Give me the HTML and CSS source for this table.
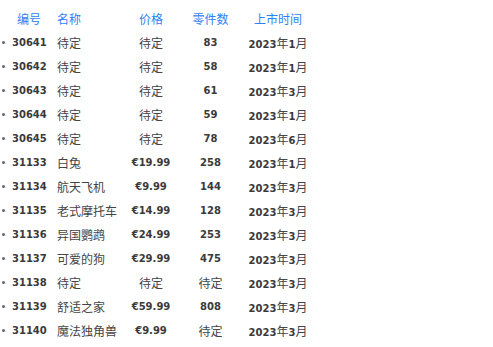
FILE: index.html
```html
<!DOCTYPE html>
<html lang="zh">
<head>
<meta charset="utf-8">
<link rel="stylesheet" href="styles.css">
</head>
<body>
<div class="list">
  <div class="row head">
    <span></span><span class="c">编号</span><span class="name">名称</span><span class="c">价格</span><span class="c">零件数</span><span class="c">上市时间</span>
  </div>
  <div class="row"><i class="dot"></i><span class="c n">30641</span><span class="name">待定</span><span class="c">待定</span><span class="c n">83</span><span class="c"><b class="n">2023</b>年<b class="n">1</b>月</span></div>
  <div class="row"><i class="dot"></i><span class="c n">30642</span><span class="name">待定</span><span class="c">待定</span><span class="c n">58</span><span class="c"><b class="n">2023</b>年<b class="n">1</b>月</span></div>
  <div class="row"><i class="dot"></i><span class="c n">30643</span><span class="name">待定</span><span class="c">待定</span><span class="c n">61</span><span class="c"><b class="n">2023</b>年<b class="n">3</b>月</span></div>
  <div class="row"><i class="dot"></i><span class="c n">30644</span><span class="name">待定</span><span class="c">待定</span><span class="c n">59</span><span class="c"><b class="n">2023</b>年<b class="n">1</b>月</span></div>
  <div class="row"><i class="dot"></i><span class="c n">30645</span><span class="name">待定</span><span class="c">待定</span><span class="c n">78</span><span class="c"><b class="n">2023</b>年<b class="n">6</b>月</span></div>
  <div class="row"><i class="dot"></i><span class="c n">31133</span><span class="name">白兔</span><span class="c n">€19.99</span><span class="c n">258</span><span class="c"><b class="n">2023</b>年<b class="n">1</b>月</span></div>
  <div class="row"><i class="dot"></i><span class="c n">31134</span><span class="name">航天飞机</span><span class="c n">€9.99</span><span class="c n">144</span><span class="c"><b class="n">2023</b>年<b class="n">3</b>月</span></div>
  <div class="row"><i class="dot"></i><span class="c n">31135</span><span class="name">老式摩托车</span><span class="c n">€14.99</span><span class="c n">128</span><span class="c"><b class="n">2023</b>年<b class="n">3</b>月</span></div>
  <div class="row"><i class="dot"></i><span class="c n">31136</span><span class="name">异国鹦鹉</span><span class="c n">€24.99</span><span class="c n">253</span><span class="c"><b class="n">2023</b>年<b class="n">3</b>月</span></div>
  <div class="row"><i class="dot"></i><span class="c n">31137</span><span class="name">可爱的狗</span><span class="c n">€29.99</span><span class="c n">475</span><span class="c"><b class="n">2023</b>年<b class="n">3</b>月</span></div>
  <div class="row"><i class="dot"></i><span class="c n">31138</span><span class="name">待定</span><span class="c">待定</span><span class="c">待定</span><span class="c"><b class="n">2023</b>年<b class="n">3</b>月</span></div>
  <div class="row"><i class="dot"></i><span class="c n">31139</span><span class="name">舒适之家</span><span class="c n">€59.99</span><span class="c n">808</span><span class="c"><b class="n">2023</b>年<b class="n">3</b>月</span></div>
  <div class="row"><i class="dot"></i><span class="c n">31140</span><span class="name">魔法独角兽</span><span class="c n">€9.99</span><span class="c">待定</span><span class="c"><b class="n">2023</b>年<b class="n">3</b>月</span></div>
</div>
</body>
</html>
```
FILE: styles.css
```css
html, body {
  margin: 0;
  padding: 0;
  background: #ffffff;
}
body {
  font-family: "Noto Sans CJK SC", "Noto Sans", sans-serif;
  font-size: 12px;
  color: #444444;
}
.list {
  padding-top: 6px;
}
.row {
  display: grid;
  grid-template-columns: 12px 34px 78px 54px 65px 70px;
  height: 24px;
  align-items: center;
  white-space: nowrap;
}
.head {
  color: #2f7ff5;
}
.c {
  text-align: center;
}
.name {
  padding-left: 11px;
}
.n {
  font-family: "DejaVu Sans", sans-serif;
  font-weight: bold;
  font-size: 10px;
  color: #3a3a3a;
}
.dot {
  display: block;
  width: 3px;
  height: 3px;
  border-radius: 50%;
  background: #666666;
  margin-left: 2px;
}
```
